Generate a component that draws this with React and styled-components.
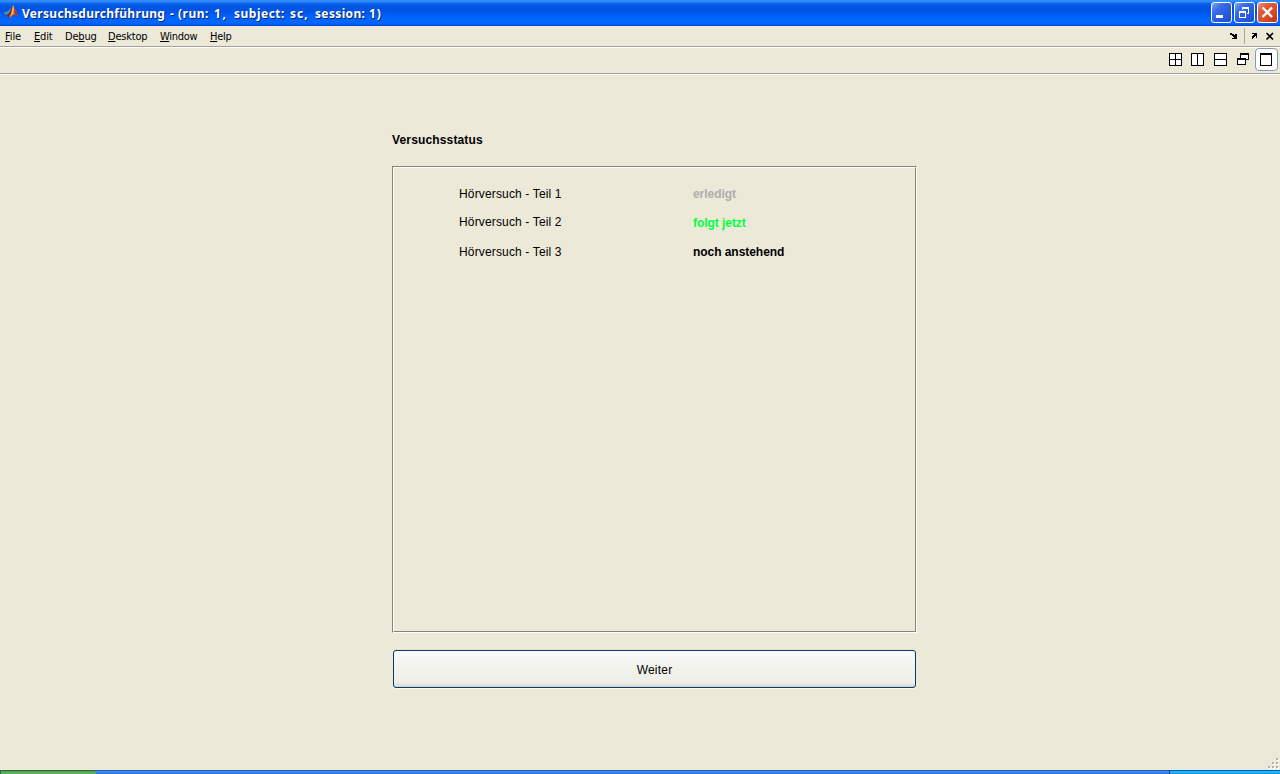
import React from "react";
import styled, { createGlobalStyle } from "styled-components";

const Global = createGlobalStyle`
  * { box-sizing: border-box; }
  html, body { margin: 0; padding: 0; overflow: hidden; background: #ece9d8; }
`;

const Desktop = styled.div`
  width: 1280px;
  height: 774px;
  display: flex;
  flex-direction: column;
  overflow: hidden;
  color: #000;
  background: #ece9d8;
  font: 12px "Liberation Sans", Arial, sans-serif;
`;

const TitleBar = styled.header`
  flex: 0 0 26px;
  display: flex;
  align-items: flex-start;
  padding: 2px 2px 0 2px;
  background: linear-gradient(180deg, #2a7cf0 0, #3d95ff 1px, #2080f8 2px, #0860e8 4px, #0054e3 7px, #0055e8 12px, #0062fb 17px, #0068ff 22px, #0060f4 24px, #0048ce 26px);
`;

const AppIcon = styled.svg`
  display: block;
  flex: none;
  margin: 2px 3px 0 1px;
`;

const Title = styled.h1`
  flex: 1;
  display: flex;
  margin: 0;
  padding-top: 1px;
  color: #fff;
  font: bold 12px/22px "Noto Sans", sans-serif;
  text-shadow: 1px 1px 0 #0a246a;
  white-space: nowrap;
`;

const Word = styled.span`
  flex: none;
  width: ${(p) => p.$w}px;
  letter-spacing: ${(p) => p.$ls || 0}px;
`;

const Controls = styled.div`
  display: flex;
  gap: 2px;
`;

const ControlButton = styled.button`
  width: 21px;
  height: 21px;
  padding: 0;
  border: 1px solid #fff;
  border-radius: 3px;
  background: ${(p) =>
    p.$close
      ? "linear-gradient(135deg, #f0a088 0, #e0603c 25%, #d9492a 65%, #b83410 100%)"
      : "linear-gradient(135deg, #86a8f4 0, #3c6fe8 28%, #2a5ce0 60%, #1c50d0 100%)"};
  svg { display: block; }
`;

const MenuBar = styled.nav`
  flex: 0 0 21px;
  display: flex;
  padding-left: 5px;
  padding-right: 5px;
  border-bottom: 1px solid #a5a294;
  font: 11px/18px "DejaVu Sans Condensed", "DejaVu Sans", sans-serif;
  font-stretch: condensed;
`;

const MenuItem = styled.span`
  width: ${(p) => p.$w}px;
  padding-top: 2px;
  letter-spacing: ${(p) => p.$ls}px;
  white-space: nowrap;
  u { text-underline-offset: 1px; text-decoration-thickness: 1px; text-decoration-skip-ink: none; }
`;

const DockControls = styled.svg`
  display: block;
  margin-left: auto;
`;

const ToolBar = styled.div`
  flex: 0 0 27px;
  display: flex;
  justify-content: flex-end;
  padding: 0 2px 0 0;
  border-top: 1px solid #fff;
  border-bottom: 1px solid #a5a294;
`;

const Tool = styled.button`
  flex: none;
  display: flex;
  align-items: flex-start;
  width: ${(p) => p.$w || 23}px;
  height: 23px;
  padding: 4px 0 0 4px;
  border: 1px solid ${(p) => (p.$selected ? "#7f9db9" : "transparent")};
  border-radius: 4px;
  background: ${(p) => (p.$selected ? "#fff" : "transparent")};
  svg { display: block; }
`;

const Figure = styled.main`
  flex: 1;
  min-height: 0;
  border-top: 1px solid #fff;
  padding: 58px 0 0 392px;
  display: flex;
  flex-direction: column;
`;

const Heading = styled.h2`
  flex: none;
  margin: 0 0 18px;
  font: bold 12px/15px "Liberation Sans", Arial, sans-serif;
  letter-spacing: 0.15px;
`;

const StatusPanel = styled.section`
  flex: none;
  width: 525px;
  height: 467px;
  border: 1px solid;
  border-color: #848478 #fff #fff #848478;
`;

const PanelInner = styled.div`
  height: 100%;
  padding: 19px 0 0 65px;
  border: 1px solid;
  border-color: #fff #848478 #848478 #fff;
`;

const Row = styled.div`
  display: flex;
  align-items: flex-start;
  height: 29px;
  line-height: 15px;
`;

const Part = styled.span`
  width: 234px;
  margin-top: ${(p) => (p.$raised ? -1 : 0)}px;
  letter-spacing: 0.15px;
`;

const Status = styled.span`
  font-weight: bold;
  letter-spacing: -0.05px;
  color: ${(p) => p.$color};
`;

const NextButton = styled.button`
  flex: none;
  width: 523px;
  height: 38px;
  margin: 17px 0 0 1px;
  padding: 1px 0 0;
  border: 1px solid #003c74;
  border-radius: 3px;
  background: linear-gradient(180deg, #fff 0, #f6f6f2 7px, #eeeee8 31px, #e4e2da 34px, #d6d0c5 36px);
  box-shadow: 0 1px 0 #f8f7f0, 0 -1px 0 #e2dfcf;
  color: #000;
  font: 12px "Liberation Sans", Arial, sans-serif;
  letter-spacing: 0.2px;
`;

const Grip = styled.svg`
  display: block;
  margin: auto 1px 1px auto;
`;

const TaskBar = styled.footer`
  flex: 0 0 4px;
  display: flex;
  background: #2c70dc;
`;

const StartEdge = styled.div`
  width: 96px;
  background: linear-gradient(180deg, #2c7030 0 1px, #4c9c4c 1px 2px, #68ac68 2px 3px, #5aa858 3px);
  border-left: 1px solid #16704c;
  border-top-right-radius: 3px;
`;

const TaskEdge = styled.div`
  flex: 1;
  background: linear-gradient(180deg, #245ccc 0 1px, #4088ea 1px 3px, #2c70dc 3px);
`;

const TrayEdge = styled.div`
  width: 111px;
  border-left: 1px solid #0a3c9c;
  background: linear-gradient(180deg, #0c58c8 0 1px, #18b8f4 1px 3px, #109cec 3px);
`;

const Line = ({ d }) => <path d={d} fill="none" stroke="#000" />;

const ToolIcon = ({ children, heavyTop }) => (
  <svg width="13" height="13" shapeRendering="crispEdges">
    <rect x=".5" y=".5" width={heavyTop ? 11 : 12} height="12" fill="#fff" stroke="#000" />
    {heavyTop && <Line d="M0 1.5h12" />}
    {children}
  </svg>
);

const words = [
  ["Versuchsdurchführung", 148, 0.3],
  ["-", 8],
  ["(run:", 36, 0.5],
  ["1,", 20, 1.6],
  ["subject:", 56, 0.5],
  ["sc,", 25, 1],
  ["session:", 54, 0.35],
  ["1)", 14, 0.9],
];

const menus = [
  ["", "F", "ile", 29, -0.1],
  ["", "E", "dit", 31, -0.2],
  ["De", "b", "ug", 43, -0.2],
  ["", "D", "esktop", 52, -0.2],
  ["", "W", "indow", 50, -0.3],
  ["", "H", "elp", 25, -0.3],
];

export default function App() {
  return (
    <Desktop>
      <Global />
      <TitleBar>
        <AppIcon width="16" height="16" viewBox="0 0 16 16">
          <path d="M0 9L5 7L8 4L7 10L4 11Z" fill="#4b91a0" />
          <path d="M4 11L7 8L10 1L8 12L6 14Z" fill="#76231b" />
          <path d="M10 1L12 5L15 12L11 10L7 14L6 12L8 9Z" fill="#e66a20" />
          <path d="M10 1L11 5L10 10L8 12Z" fill="#f8b05c" />
          <path d="M11 3L15 12L12 10Z" fill="#a82c14" />
        </AppIcon>
        <Title>
          {words.map(([t, w, ls]) => (
            <Word key={t} $w={w} $ls={ls}>{t}</Word>
          ))}
        </Title>
        <Controls>
          <ControlButton aria-label="Minimize">
            <svg width="19" height="19" shapeRendering="crispEdges"><path d="M4 12h7v3H4z" fill="#fff" /></svg>
          </ControlButton>
          <ControlButton aria-label="Restore">
            <svg width="19" height="19" fill="#fff" shapeRendering="crispEdges">
              <path d="M7 4h7v7h-2v-1h1V6H8v1H7z" />
              <path fillRule="evenodd" d="M4 8h7v7H4zM5 10v4h5v-4z" />
            </svg>
          </ControlButton>
          <ControlButton $close aria-label="Close">
            <svg width="19" height="19"><path d="M4.5 4.5L14 14M14 4.5L4.5 14" stroke="#fff" strokeWidth="2.3" /></svg>
          </ControlButton>
        </Controls>
      </TitleBar>
      <MenuBar>
        {menus.map(([a, u, b, w, ls]) => (
          <MenuItem key={u + b} $w={w} $ls={ls}>{a}<u>{u}</u>{b}</MenuItem>
        ))}
        <DockControls width="45" height="20" shapeRendering="crispEdges">
          <path d="M0 7h2v1h2v1h1v-1h2v5H2v-1h2v-1h-1v-1h-1v-1H0z" />
          <path d="M14.5 2v16" stroke="#aca899" />
          <path d="M22 7h5v5h-1v-2h-1v1h-1v1h-1v1h-1v-3h1v-1h1v-1h-2z" />
          <path d="M36.5 7L43 13.5M43 7L36.5 13.5" stroke="#000" strokeWidth="1.6" shapeRendering="auto" />
        </DockControls>
      </MenuBar>
      <ToolBar>
        <Tool $w={22}><ToolIcon><Line d="M6.5 0v13M0 6.5h13" /></ToolIcon></Tool>
        <Tool><ToolIcon><Line d="M6.5 0v13" /></ToolIcon></Tool>
        <Tool><ToolIcon><Line d="M0 6.5h13" /></ToolIcon></Tool>
        <Tool>
          <svg width="13" height="13" shapeRendering="crispEdges">
            <path d="M3.5 .5h8v6h-8z" fill="#fff" stroke="#000" /><Line d="M3 1.5h9" />
            <path d="M.5 5.5h8v6h-8z" fill="#fff" stroke="#000" /><Line d="M0 6.5h9" />
          </svg>
        </Tool>
        <Tool $selected><ToolIcon heavyTop /></Tool>
      </ToolBar>
      <Figure>
        <Heading>Versuchsstatus</Heading>
        <StatusPanel>
          <PanelInner>
            <Row><Part>Hörversuch - Teil 1</Part><Status $color="#aeaeae">erledigt</Status></Row>
            <Row><Part $raised>Hörversuch - Teil 2</Part><Status $color="#00ff40">folgt jetzt</Status></Row>
            <Row><Part>Hörversuch - Teil 3</Part><Status $color="#000">noch anstehend</Status></Row>
          </PanelInner>
        </StatusPanel>
        <NextButton>Weiter</NextButton>
        <Grip width="11" height="11" shapeRendering="crispEdges">
          {[[8, 0], [4, 4], [8, 4], [0, 8], [4, 8], [8, 8]].map(([x, y]) => (
            <g key={`${x}-${y}`}>
              <rect x={x + 1} y={y + 1} width="2" height="2" fill="#fff" />
              <rect x={x} y={y} width="2" height="2" fill="#b8b4a3" />
            </g>
          ))}
        </Grip>
      </Figure>
      <TaskBar><StartEdge /><TaskEdge /><TrayEdge /></TaskBar>
    </Desktop>
  );
}
